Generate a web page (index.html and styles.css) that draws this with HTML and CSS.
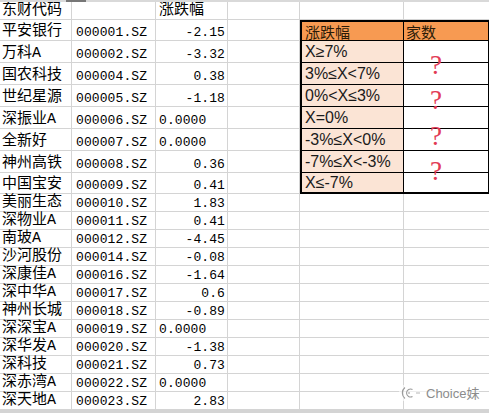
FILE: index.html
```html
<!DOCTYPE html>
<html lang="zh-CN">
<head>
<meta charset="utf-8">
<title>涨跌幅统计</title>
<link rel="stylesheet" href="styles.css">
</head>
<body>
<div class="sheet">
  <div class="topbar"><span class="sel"></span></div>
  <div class="grid">
    <div class="rt">
      <div class="rh">涨跌幅</div><div class="rh rh2">家数</div>
      <div class="rl">X≥7%</div><div class="rv"></div>
      <div class="rl">3%≤X&lt;7%</div><div class="rv"></div>
      <div class="rl">0%&lt;X≤3%</div><div class="rv"></div>
      <div class="rl">X=0%</div><div class="rv"></div>
      <div class="rl">-3%≤X&lt;0%</div><div class="rv"></div>
      <div class="rl">-7%≤X&lt;-3%</div><div class="rv"></div>
      <div class="rl last">X≤-7%</div><div class="rv last"></div>
      <span class="q q1">?</span>
      <span class="q q2">?</span>
      <span class="q q3">?</span>
      <span class="q q4">?</span>
    </div>

    <div class="c n">东财代码</div><div class="c"></div><div class="c n v0">涨跌幅</div><div class="c"></div><div class="c"></div><div class="c f"></div>

    <div class="c n">平安银行</div><div class="c m">000001.SZ</div><div class="c m r">-2.15</div><div class="c"></div>
    <div class="c n">万科A</div><div class="c m">000002.SZ</div><div class="c m r">-3.32</div><div class="c"></div>
    <div class="c n">国农科技</div><div class="c m">000004.SZ</div><div class="c m r">0.38</div><div class="c"></div>
    <div class="c n">世纪星源</div><div class="c m">000005.SZ</div><div class="c m r">-1.18</div><div class="c"></div>
    <div class="c n">深振业A</div><div class="c m">000006.SZ</div><div class="c m l">0.0000</div><div class="c"></div>
    <div class="c n">全新好</div><div class="c m">000007.SZ</div><div class="c m l">0.0000</div><div class="c"></div>
    <div class="c n">神州高铁</div><div class="c m">000008.SZ</div><div class="c m r">0.36</div><div class="c"></div>
    <div class="c n">中国宝安</div><div class="c m">000009.SZ</div><div class="c m r">0.41</div><div class="c"></div>

    <div class="c n">美丽生态</div><div class="c m">000010.SZ</div><div class="c m r">1.83</div><div class="c"></div><div class="c"></div><div class="c f"></div>
    <div class="c n">深物业A</div><div class="c m">000011.SZ</div><div class="c m r">0.41</div><div class="c"></div><div class="c"></div><div class="c f"></div>
    <div class="c n">南玻A</div><div class="c m">000012.SZ</div><div class="c m r">-4.45</div><div class="c"></div><div class="c"></div><div class="c f"></div>
    <div class="c n">沙河股份</div><div class="c m">000014.SZ</div><div class="c m r">-0.08</div><div class="c"></div><div class="c"></div><div class="c f"></div>
    <div class="c n">深康佳A</div><div class="c m">000016.SZ</div><div class="c m r">-1.64</div><div class="c"></div><div class="c"></div><div class="c f"></div>
    <div class="c n">深中华A</div><div class="c m">000017.SZ</div><div class="c m r">0.6</div><div class="c"></div><div class="c"></div><div class="c f"></div>
    <div class="c n">神州长城</div><div class="c m">000018.SZ</div><div class="c m r">-0.89</div><div class="c"></div><div class="c"></div><div class="c f"></div>
    <div class="c n">深深宝A</div><div class="c m">000019.SZ</div><div class="c m l">0.0000</div><div class="c"></div><div class="c"></div><div class="c f"></div>
    <div class="c n">深华发A</div><div class="c m">000020.SZ</div><div class="c m r">-1.38</div><div class="c"></div><div class="c"></div><div class="c f"></div>
    <div class="c n">深科技</div><div class="c m">000021.SZ</div><div class="c m r">0.73</div><div class="c"></div><div class="c"></div><div class="c f"></div>
    <div class="c n">深赤湾A</div><div class="c m">000022.SZ</div><div class="c m l">0.0000</div><div class="c"></div><div class="c"></div><div class="c f"></div>
    <div class="c n">深天地A</div><div class="c m">000023.SZ</div><div class="c m r">2.83</div><div class="c"></div><div class="c"></div><div class="c f"></div>
  </div>
  <div class="bottombar"></div>
  <div class="wm">
    <svg class="wm-icon" width="22" height="16" viewBox="0 0 22 16">
      <path d="M6 2.5 A7 7 0 0 0 6 13.5" fill="none" stroke="#9a9a9a" stroke-width="1.1"/>
      <path d="M13.5 4.5 A4 4 0 1 0 13.5 11.5" fill="none" stroke="#9a9a9a" stroke-width="1.1"/>
      <line x1="9" y1="8" x2="11" y2="8" stroke="#9a9a9a" stroke-width="1.1"/>
      <line x1="17" y1="8" x2="21" y2="8" stroke="#b5b5b5" stroke-width="1"/>
    </svg>
    <span class="wm-text">Choice妹</span>
  </div>
</div>
</body>
</html>
```

FILE: styles.css
```css
html, body {
  margin: 0;
  padding: 0;
  background: #ffffff;
}

.sheet {
  position: relative;
  width: 489px;
  height: 413px;
  overflow: hidden;
  background: #ffffff;
}

.topbar {
  height: 2px;
  background: #d9d9d9;
  position: relative;
}
.topbar .sel {
  position: absolute;
  left: 66px;
  top: 0;
  width: 20px;
  height: 2px;
  background: #777;
}

.grid {
  display: grid;
  grid-template-columns: 72px 84px 72px 72px 104px 85px;
  grid-template-rows: 18px 21px 22px 22px 22px 22px 22px 22px 21px repeat(12, 18px);
}

.c {
  box-sizing: border-box;
  border-right: 1px solid #d4d4d4;
  border-bottom: 1px solid #d4d4d4;
  display: flex;
  align-items: flex-end;
  padding-bottom: 1px;
  color: #000;
  white-space: nowrap;
  overflow: visible;
}
.c.f { border-right: none; }

.n {
  font-family: "Liberation Mono", "Noto Sans CJK SC", monospace;
  font-size: 15px;
  line-height: 15px;
  padding-left: 2px;
}
.n.v0 { padding-left: 3px; }

.m {
  font-family: "Liberation Mono", monospace;
  font-size: 13px;
  line-height: 13px;
  letter-spacing: 0.1px;
  padding-left: 4px;
  padding-bottom: 1px;
}
.m.r {
  justify-content: flex-end;
  padding-left: 0;
  padding-right: 2px;
}
.m.l { padding-left: 3px; }

/* right summary table */
.rt {
  grid-column: 5 / 7;
  grid-row: 2 / 10;
  position: relative;
  box-sizing: border-box;
  border: 2px solid #000;
  border-right: 1px solid #000;
  display: grid;
  grid-template-columns: 102px 1fr;
  grid-template-rows: 19px repeat(6, 22px) 19px;
  font-family: "Liberation Sans", "Noto Sans CJK SC", sans-serif;
  z-index: 1;
  background: #fff;
}
.rh, .rl, .rv {
  box-sizing: border-box;
  border-bottom: 1px solid #000;
  display: flex;
  align-items: center;
  padding-left: 3px;
}
.rh {
  background: #f79a52;
  color: #2a1a08;
  font-family: "Noto Sans CJK SC", sans-serif;
  font-size: 15px;
  line-height: 15px;
  border-right: 1px solid #000;
}
.rh.rh2 { border-right: none; padding-left: 2px; }
.rl {
  background: #fbe4d5;
  border-right: 1px solid #000;
  font-size: 16px;
  color: #1a1a1a;
}
.rl.last, .rv.last { border-bottom: none; }

.q {
  position: absolute;
  font-family: "Liberation Serif", serif;
  font-size: 27px;
  line-height: 27px;
  color: #e23a55;
  left: 128px;
}
.q1 { top: 30px; }
.q2 { top: 65px; }
.q3 { top: 101px; }
.q4 { top: 136px; }

.bottombar {
  height: 3px;
  background: #d4d4d4;
}

.wm {
  position: absolute;
  left: 399px;
  top: 385px;
  display: flex;
  align-items: center;
  gap: 5px;
  background: rgba(255,255,255,0.6);
}
.wm-icon { display: block; }
.wm-text {
  font-family: "Liberation Sans", "Noto Sans CJK SC", sans-serif;
  font-size: 13px;
  line-height: 15px;
  color: #8c8c8c;
}
```
